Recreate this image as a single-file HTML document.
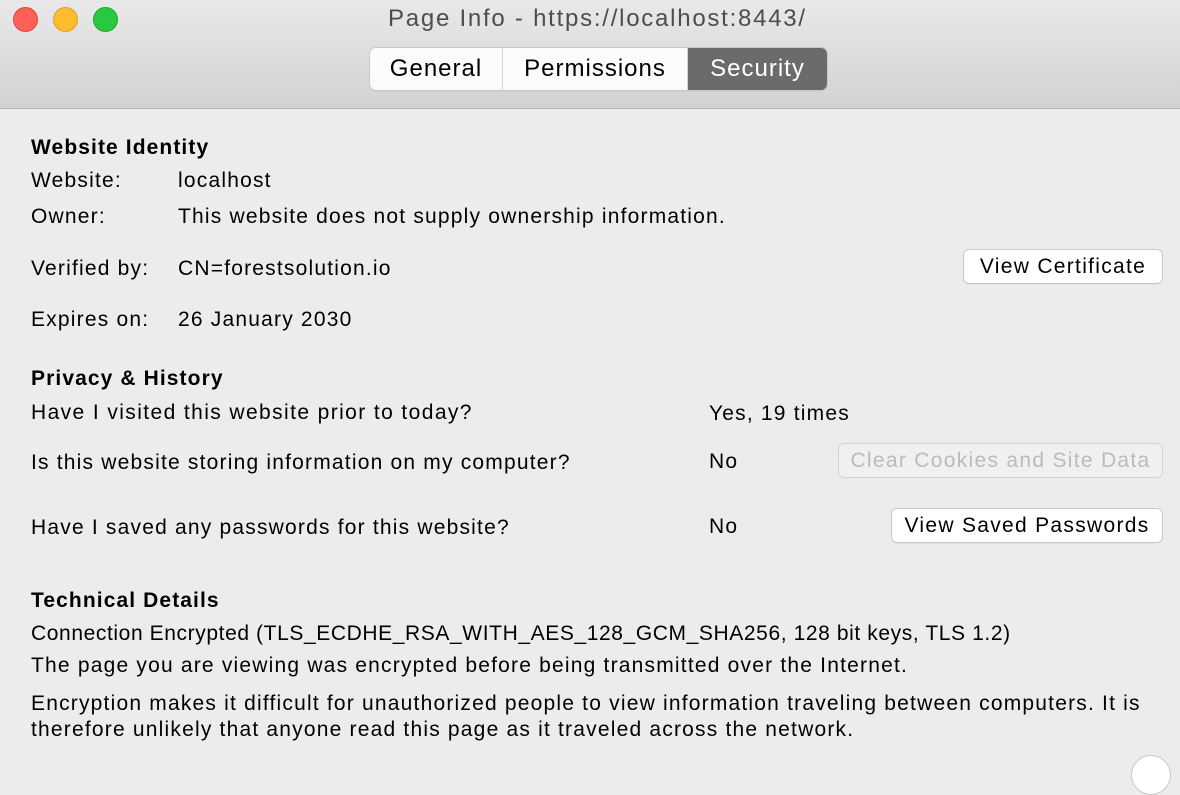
<!DOCTYPE html>
<html><head><meta charset="utf-8"><style>
*{margin:0;padding:0;box-sizing:border-box}
body{width:1180px;height:760px;background:#ececec;font-family:"Liberation Sans",sans-serif;color:#000;position:relative;overflow:hidden;font-size:21px;letter-spacing:1.2px}
.tb{position:absolute;left:0;top:0;width:1180px;height:109px;background:linear-gradient(#e9e9e9,#d2d2d2);border-bottom:1px solid #b4b4b4}
.dot{position:absolute;top:7px;width:25px;height:25px;border-radius:50%}
.title{position:absolute;top:5px;left:388px;white-space:nowrap;font-size:24px;letter-spacing:1.75px;color:#4d4d4d}
.seg{position:absolute;top:48px;left:370px;height:42px;display:flex;border-radius:6px;overflow:hidden;box-shadow:0 0 0 1px #c8c8c8,0 1px 1px #b0b0b0;font-size:24px;letter-spacing:1px}
.seg div{height:42px;line-height:42px;text-align:center;background:#fbfbfb;border-right:1px solid #d4d4d4}
.seg .on{background:#6b6b6b;color:#fff;border:none}
.t{position:absolute;white-space:nowrap;line-height:1}
b{font-weight:bold;letter-spacing:1.1px}
.btn{position:absolute;height:33px;background:#fff;border-radius:5px;box-shadow:0 0 0 1px #c9c9c9,0 1px 1px #aaa;text-align:center;line-height:33px;font-size:21px;letter-spacing:1.3px}
.dis{color:#bbb;background:#f0f0f0;box-shadow:0 0 0 1px #d4d4d4}
</style></head><body>
<div class="tb"></div>
<div class="dot" style="left:13px;background:#fe5f57;border:1px solid #e0443e"></div>
<div class="dot" style="left:53px;background:#febc2e;border:1px solid #dea123"></div>
<div class="dot" style="left:93px;background:#28c840;border:1px solid #1aab29"></div>
<div class="title">Page Info - https://localhost:8443/</div>
<div class="seg"><div style="width:133px">General</div><div style="width:185px">Permissions</div><div class="on" style="width:139px">Security</div></div>

<div class="t" style="left:31px;top:137px"><b>Website Identity</b></div>
<div class="t" style="left:31px;top:170px">Website:</div>
<div class="t" style="left:178px;top:170px">localhost</div>
<div class="t" style="left:31px;top:206px">Owner:</div>
<div class="t" style="left:178px;top:206px">This website does not supply ownership information.</div>
<div class="t" style="left:31px;top:258px">Verified by:</div>
<div class="t" style="left:178px;top:258px">CN=forestsolution.io</div>
<div class="btn" style="left:964px;top:250px;width:198px">View Certificate</div>
<div class="t" style="left:31px;top:309px">Expires on:</div>
<div class="t" style="left:178px;top:309px">26 January 2030</div>

<div class="t" style="left:31px;top:368px"><b>Privacy &amp; History</b></div>
<div class="t" style="left:31px;top:402px;letter-spacing:1.4px">Have I visited this website prior to today?</div>
<div class="t" style="left:709px;top:403px">Yes, 19 times</div>
<div class="t" style="left:31px;top:452px">Is this website storing information on my computer?</div>
<div class="t" style="left:709px;top:451px">No</div>
<div class="btn dis" style="left:839px;top:444px;width:323px">Clear Cookies and Site Data</div>
<div class="t" style="left:31px;top:517px">Have I saved any passwords for this website?</div>
<div class="t" style="left:709px;top:516px">No</div>
<div class="btn" style="left:892px;top:509px;width:270px">View Saved Passwords</div>

<div class="t" style="left:31px;top:590px"><b>Technical Details</b></div>
<div class="t" style="left:31px;top:623px;letter-spacing:0.6px">Connection Encrypted (TLS_ECDHE_RSA_WITH_AES_128_GCM_SHA256, 128 bit keys, TLS 1.2)</div>
<div class="t" style="left:31px;top:655px">The page you are viewing was encrypted before being transmitted over the Internet.</div>
<div class="t" style="left:31px;top:693px">Encryption makes it difficult for unauthorized people to view information traveling between computers. It is</div>
<div class="t" style="left:31px;top:719px">therefore unlikely that anyone read this page as it traveled across the network.</div>
<div style="position:absolute;left:1131px;top:755px;width:40px;height:40px;border-radius:50%;background:#fff;border:1px solid #c8c8c8"></div>
</body></html>
